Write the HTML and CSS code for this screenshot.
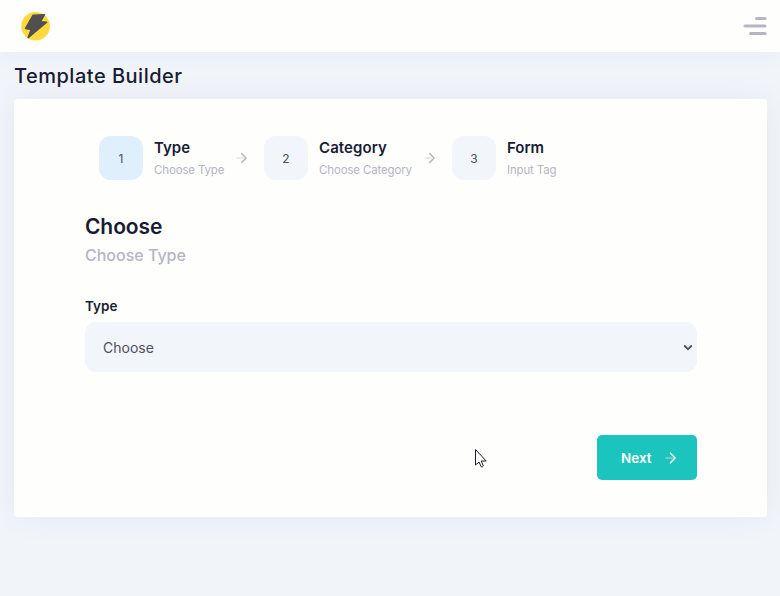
FILE: index.html
```html
<!DOCTYPE html>
<html lang="en">
<head>
<meta charset="utf-8">
<title>Template Builder</title>
<link rel="stylesheet" href="styles.css">
</head>
<body>
<header class="topbar">
  <svg class="logo" width="30" height="30" viewBox="0 0 30 30"><circle cx="14.6" cy="15.2" r="14.3" fill="#fed93d"/><path d="M12.2 4.2 23.4 3.7 19.4 10.8 25.6 11.2 7.2 26.6 10.2 18.5 4.6 17.5Z" fill="#505050" stroke="#505050" stroke-width="1.6" stroke-linejoin="round"/></svg>
  <svg class="menu" width="24" height="20" viewBox="0 0 24 20" fill="#b5b5c3"><rect x="12" y="1" width="11.5" height="3" rx="1.5"/><rect x="0.5" y="8.5" width="23" height="3" rx="1.5"/><rect x="6" y="16" width="17.5" height="3" rx="1.5"/></svg>
</header>
<main class="page">
  <h1 class="page-title">Template Builder</h1>
  <section class="card">
    <nav class="steps">
      <div class="step step-active">
        <span class="badge">1</span>
        <div class="labels"><div class="name">Type</div><div class="hint hint-type">Choose Type</div></div>
      </div>
      <svg class="arrow" width="12" height="12" viewBox="0 0 12 12"><path d="M1 6H7" opacity=".35"/><path d="M5.7 1.5 10 6 5.7 10.5"/></svg>
      <div class="step">
        <span class="badge">2</span>
        <div class="labels"><div class="name name-category">Category</div><div class="hint hint-category">Choose Category</div></div>
      </div>
      <svg class="arrow" width="12" height="12" viewBox="0 0 12 12"><path d="M1 6H7" opacity=".35"/><path d="M5.7 1.5 10 6 5.7 10.5"/></svg>
      <div class="step">
        <span class="badge">3</span>
        <div class="labels"><div class="name">Form</div><div class="hint">Input Tag</div></div>
      </div>
    </nav>
    <form class="form">
      <h2 class="heading">Choose</h2>
      <p class="sub">Choose Type</p>
      <div class="label">Type</div>
      <div class="select"><span class="value">Choose</span>
        <svg width="10" height="8" viewBox="0 0 10 8"><path d="M1.2 2.5 5 6.2 8.8 2.5" fill="none" stroke="#50505e" stroke-width="1.8"/></svg>
      </div>
      <div class="actions">
        <button class="next" type="button"><span>Next</span><svg class="next-arrow" width="12" height="12" viewBox="0 0 12 12"><path d="M1 6H7" opacity=".4"/><path d="M5.5 1.2 10 6 5.5 10.8"/></svg></button>
      </div>
    </form>
  </section>
</main>
<svg class="cursor" width="13" height="20" viewBox="0 0 13 20"><path d="M.5 .5V16L4 13 6.2 17.8Q7.7 18.2 8.4 17L6.2 12H11.2Z" fill="#fff" stroke="#1d1d2b"/></svg>
</body>
</html>
```
FILE: styles.css
```css
* { box-sizing: border-box; }
body { margin: 0; height: 596px; overflow: hidden; background: #f1f5fa; color: #181c32; font-family: Inter, "Open Sans", sans-serif; }
h1, h2, p { margin: 0; white-space: nowrap; }
svg { display: block; flex: none; }
.topbar { height: 52px; background: #fefefd; display: flex; justify-content: space-between; align-items: center; padding: 0 13px 0 21px; box-shadow: 0 4px 20px rgba(82, 63, 105, .05); }
.page { padding: 0 13px 0 14px; }
.page-title { height: 47px; line-height: 48px; font-size: 20px; font-weight: 500; letter-spacing: .5px; }
.card { height: 418px; border-radius: 4px; background: #fefefd; box-shadow: 0 0 30px rgba(82, 63, 105, .07); padding: 37px 70px 0 71px; }
.steps { display: flex; align-items: center; height: 44px; padding-left: 14px; }
.step { display: flex; align-items: center; gap: 11px; }
.badge { width: 44px; height: 44px; border-radius: 12px; background: #f2f5fa; display: flex; align-items: center; justify-content: center; font-size: 12px; color: #464e5f; }
.step-active .badge { background: #dfeffb; }
.labels { white-space: nowrap; padding-top: 1px; }
.name { font-size: 15px; line-height: 22px; font-weight: 600; }
.name-category { letter-spacing: .1px; }
.hint { font-size: 11.5px; line-height: 22px; letter-spacing: -.15px; color: #b5b5c3; }
.hint-type { width: 70px; }
.hint-category { width: 93px; }
.arrow { margin: 0 16px 0 12px; fill: none; stroke: #b5b5c3; stroke-width: 1.5; stroke-linecap: round; }
.form { padding-top: 32px; }
.heading { font-size: 21px; line-height: 30px; font-weight: 600; letter-spacing: -.1px; }
.sub { font-size: 16px; line-height: 26px; font-weight: 500; color: #b5b5c3; }
.label { height: 24px; margin-top: 26px; font-size: 13.5px; line-height: 24px; font-weight: 600; }
.select { width: 612px; height: 50px; margin-top: 4px; border-radius: 11px; background: #f2f5fa; display: flex; align-items: center; justify-content: space-between; padding: 0 4px 0 18px; font-size: 14px; color: #50505e; }
.actions { display: flex; justify-content: flex-end; margin-top: 63px; }
.next { width: 100px; height: 45px; border: 0; border-radius: 5px; background: #1bc5bd; color: #fff; display: flex; align-items: center; padding: 0 20px 0 24px; justify-content: space-between; font: 600 13.5px Inter, sans-serif; }
.next-arrow { fill: none; stroke: #fff; stroke-width: 1.5; stroke-linecap: round; }
.cursor { position: absolute; left: 475px; top: 449px; }
```
